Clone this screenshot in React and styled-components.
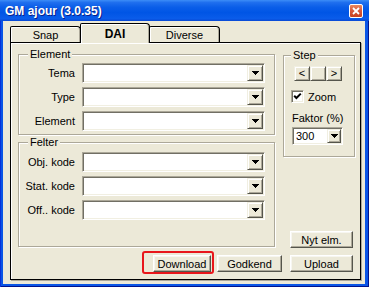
import React from 'react';
import styled, { createGlobalStyle } from 'styled-components';

const Global = createGlobalStyle`
  html, body { margin: 0; padding: 0; background: #fff; }
  body { font-family: "Liberation Sans", Arial, sans-serif; font-size: 11px; color: #000; }
  * { box-sizing: border-box; }
`;

const FONT = `"Liberation Sans", Arial, sans-serif`;

const Window = styled.div`
  width: 369px;
  height: 287px;
  display: flex;
  flex-direction: column;
  background: #0A55E6;
  box-shadow: inset 1px 0 #0831D9, inset -1px 0 #00138C, inset 0 -1px #00138C;
  overflow: hidden;
`;

const TitleBar = styled.div`
  height: 21px;
  flex: none;
  display: flex;
  align-items: center;
  justify-content: space-between;
  padding: 0 6px 0 5px;
  background: linear-gradient(to bottom, #3C8DF7 0%, #1F6FEE 12%, #0A5DE8 35%, #0055E5 60%, #0A5CEA 88%, #0848D4 100%);
`;

const Title = styled.span`
  color: #fff;
  font: bold 12px ${FONT};
  text-shadow: 1px 1px #0A1F8A;
`;

const CloseButton = styled.div`
  width: 14px;
  height: 14px;
  border: 1px solid #fff;
  border-radius: 2px;
  background: linear-gradient(to bottom, #E9885F 0%, #D8573A 50%, #C6421F 100%);
  display: flex;
  align-items: center;
  justify-content: center;
`;

const Client = styled.div`
  flex: 1;
  margin: 0 4px 3px 3px;
  background: #ECE9D8;
  display: flex;
  flex-direction: column;
  padding: 2px 4px 4px 7px;
`;

const TabBar = styled.div`
  height: 19px;
  flex: none;
  display: flex;
  align-items: flex-end;
  position: relative;
  z-index: 1;
`;

const Tab = styled.div`
  width: ${p => p.$w}px;
  height: ${p => (p.$active ? 20 : 16)}px;
  margin: 0 ${p => (p.$active ? -1 : 0)}px ${p => (p.$active ? -1 : 0)}px;
  position: relative;
  z-index: ${p => (p.$active ? 2 : 1)};
  background: #ECE9D8;
  border: 1px solid #000;
  border-bottom: none;
  border-radius: 2px 4px 0 0;
  box-shadow: inset 1px 1px #fff, inset -1px 0 #ACA899;
  display: flex;
  justify-content: center;
  align-items: center;
  padding-top: ${p => (p.$active ? 1 : 0)}px;
  font-weight: ${p => (p.$active ? 'bold' : 'normal')};
  font-size: ${p => (p.$active ? 12 : 11)}px;
`;

const Panel = styled.div`
  flex: 1;
  background: #ECE9D8;
  border: 1px solid #000;
  box-shadow: inset 1px 1px #fff, 1px 1px #ACA899;
  padding: 5px 5px 7px 7px;
  display: flex;
  flex-direction: column;
`;

const Main = styled.div`
  display: flex;
  gap: 8px;
`;

const LeftColumn = styled.div`
  width: 257px;
  display: flex;
  flex-direction: column;
`;

const RightColumn = styled.div`
  width: 72px;
  display: flex;
  flex-direction: column;
`;

const Group = styled.fieldset`
  margin: ${p => p.$mt || 0}px 0 0;
  padding: ${p => p.$pt}px ${p => p.$pr}px ${p => p.$pb}px ${p => p.$pl}px;
  border: 1px solid #ACA899;
  box-shadow: inset 1px 1px #fff, 1px 1px #fff;
  min-inline-size: 0;
`;

const Legend = styled.legend`
  margin-left: ${p => p.$offset}px;
  padding: 0 2px;
  line-height: 13px;
  font-size: 11px;
  background: #ECE9D8;
`;

const FieldGrid = styled.div`
  display: grid;
  grid-template-columns: 56px 183px;
  column-gap: 7px;
  row-gap: 4px;
  align-items: center;
`;

const FieldLabel = styled.label`
  justify-self: end;
  white-space: nowrap;
`;

const ComboBox = styled.div`
  width: ${p => p.$w}px;
  height: ${p => p.$h}px;
  display: flex;
  align-items: stretch;
  padding: 1px;
  background: #fff;
  border: 1px solid;
  border-color: #ACA899 #fff #fff #ACA899;
  box-shadow: inset 1px 1px #716F64, inset -1px -1px #F1EFE2;
`;

const ComboValue = styled.span`
  flex: 1;
  padding-left: 2px;
  display: flex;
  align-items: center;
  font-size: 11px;
`;

const Raised = styled.div`
  background: #ECE9D8;
  border: 1px solid;
  border-color: #F1EFE2 #55554C #55554C #F1EFE2;
  box-shadow: inset 1px 1px #fff, inset -1px -1px #ACA899;
  display: flex;
  align-items: center;
  justify-content: center;
`;

const DropButton = styled(Raised)`
  width: ${p => p.$w}px;
  flex: none;
`;

const StepRow = styled.div`
  display: flex;
  margin-left: 2px;
`;

const StepButton = styled(Raised)`
  width: 16px;
  height: 15px;
  flex: none;
  font-size: 11px;
  line-height: 1;
`;

const CheckRow = styled.label`
  display: flex;
  align-items: center;
  gap: 4px;
  margin: 9px 0 0 -1px;
`;

const CheckBox = styled.span`
  width: 13px;
  height: 13px;
  background: #fff;
  border: 1px solid;
  border-color: #ACA899 #fff #fff #ACA899;
  box-shadow: inset 1px 1px #716F64, inset -1px -1px #F1EFE2;
  display: flex;
  align-items: center;
  justify-content: center;
`;

const SmallLabel = styled.div`
  margin-top: ${p => p.$mt}px;
  line-height: 12px;
  white-space: nowrap;
`;

const ComboWrap = styled.div`
  margin-top: 3px;
`;

const PushButton = styled.button`
  width: ${p => p.$w}px;
  height: 17px;
  margin: 0 0 0 ${p => p.$ml || 0}px;
  padding: 0;
  font: 11px ${FONT};
  color: #000;
  background: #ECE9D8;
  border: 1px solid;
  border-color: #fff #55554C #55554C #fff;
  box-shadow: inset -1px -1px #ACA899, inset 1px 1px #F7F6F0;
  display: flex;
  align-items: center;
  justify-content: center;
`;

const NewButton = styled(PushButton)`
  margin-top: auto;
  margin-bottom: -1px;
  margin-right: 2px;
  align-self: flex-end;
`;

const ButtonRow = styled.div`
  margin-top: 8px;
  display: flex;
  justify-content: flex-end;
  padding-right: 2px;
`;

const Highlight = styled.span`
  position: relative;
  display: inline-flex;
  &::after {
    content: '';
    position: absolute;
    left: -11px;
    top: -4px;
    right: -3px;
    bottom: -2px;
    border: 2px solid #E8161B;
    border-radius: 3px;
    pointer-events: none;
  }
`;

const Arrow = () => (
  <svg width="7" height="4" viewBox="0 0 7 4" shapeRendering="crispEdges">
    <path d="M0 0h7L3.5 4z" fill="#000" />
  </svg>
);

const Combo = ({ w, h = 20, value, btn = 16 }) => (
  <ComboBox $w={w} $h={h}>
    <ComboValue>{value}</ComboValue>
    <DropButton $w={btn}>
      <Arrow />
    </DropButton>
  </ComboBox>
);

const Check = () => (
  <svg width="9" height="9" viewBox="0 0 9 9">
    <path d="M1.2 3.8 L3.4 6 L7.8 1.6" stroke="#000" strokeWidth="2" fill="none" />
  </svg>
);

const elementFields = ['Tema', 'Type', 'Element'];
const filterFields = ['Obj. kode', 'Stat. kode', 'Off.. kode'];

export default function App() {
  return (
    <>
      <Global />
      <Window>
        <TitleBar>
          <Title>GM ajour (3.0.35)</Title>
          <CloseButton>
            <svg width="8" height="8" viewBox="0 0 8 8">
              <path d="M1 1L7 7M7 1L1 7" stroke="#fff" strokeWidth="1.8" />
            </svg>
          </CloseButton>
        </TitleBar>
        <Client>
          <TabBar>
            <Tab $w={71}>Snap</Tab>
            <Tab $w={70} $active>DAI</Tab>
            <Tab $w={71}>Diverse</Tab>
          </TabBar>
          <Panel>
            <Main>
              <LeftColumn>
                <Group $pt={2} $pr={9} $pb={3} $pl={0}>
                  <Legend $offset={9}>Element</Legend>
                  <FieldGrid>
                    {elementFields.map(f => (
                      <React.Fragment key={f}>
                        <FieldLabel>{f}</FieldLabel>
                        <Combo w={183} />
                      </React.Fragment>
                    ))}
                  </FieldGrid>
                </Group>
                <Group $mt={1} $pt={3} $pr={9} $pb={26} $pl={0}>
                  <Legend $offset={9}>Felter</Legend>
                  <FieldGrid>
                    {filterFields.map(f => (
                      <React.Fragment key={f}>
                        <FieldLabel>{f}</FieldLabel>
                        <Combo w={183} />
                      </React.Fragment>
                    ))}
                  </FieldGrid>
                </Group>
              </LeftColumn>
              <RightColumn>
                <Group $mt={1} $pt={4} $pr={10} $pb={11} $pl={8}>
                  <Legend $offset={-1}>Step</Legend>
                  <StepRow>
                    <StepButton>&lt;</StepButton>
                    <StepButton>{'\u00a0'}</StepButton>
                    <StepButton>&gt;</StepButton>
                  </StepRow>
                  <CheckRow>
                    <CheckBox>
                      <Check />
                    </CheckBox>
                    <span>Zoom</span>
                  </CheckRow>
                  <SmallLabel $mt={9}>Faktor (%)</SmallLabel>
                  <ComboWrap>
                    <Combo w={51} h={18} value="300" btn={14} />
                  </ComboWrap>
                </Group>
                <NewButton $w={63}>Nyt elm.</NewButton>
              </RightColumn>
            </Main>
            <ButtonRow>
              <Highlight>
                <PushButton $w={58}>Download</PushButton>
              </Highlight>
              <PushButton $w={65} $ml={6}>Godkend</PushButton>
              <PushButton $w={63} $ml={8}>Upload</PushButton>
            </ButtonRow>
          </Panel>
        </Client>
      </Window>
    </>
  );
}
